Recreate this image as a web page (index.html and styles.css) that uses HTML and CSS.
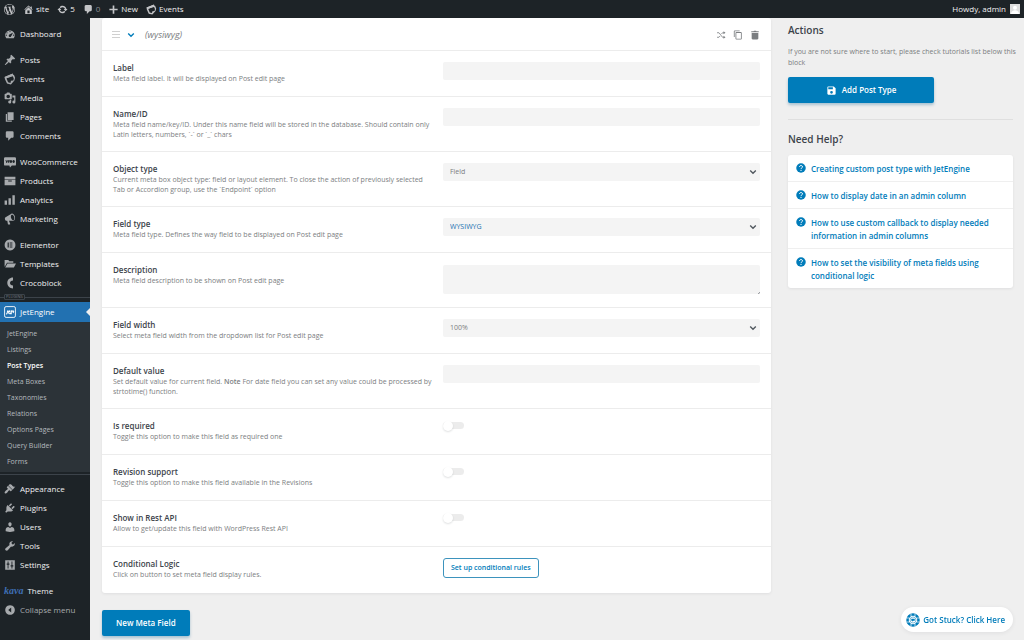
FILE: index.html
```html
<!DOCTYPE html>
<html lang="en">
<head>
<meta charset="utf-8">
<meta name="viewport" content="width=device-width, initial-scale=1">
<title>Edit Post Type</title>
<link rel="stylesheet" href="styles.css">
</head>
<body>
<svg class="sprite" aria-hidden="true">
  <symbol id="wp" viewBox="0 0 20 20"><path d="M20 10c0-5.51-4.49-10-10-10C4.48 0 0 4.49 0 10c0 5.52 4.48 10 10 10 5.51 0 10-4.48 10-10zM7.78 15.37L4.37 6.22c.55-.02 1.17-.08 1.17-.08.5-.06.44-1.13-.06-1.11 0 0-1.45.11-2.37.11-.18 0-.37 0-.58-.01C4.12 2.69 6.87 1.11 10 1.11c2.33 0 4.45.87 6.05 2.34-.68-.11-1.65.39-1.65 1.58 0 .74.45 1.36.9 2.1.35.61.55 1.36.55 2.46 0 1.49-1.4 5-1.4 5l-3.03-8.37c.54-.02.82-.17.82-.17.5-.05.44-1.25-.06-1.22 0 0-1.44.12-2.38.12-.87 0-2.33-.12-2.33-.12-.5-.03-.56 1.2-.06 1.22l.92.08 1.26 3.41zM17.41 10c.24-.64.74-1.87.43-4.25.7 1.29 1.05 2.71 1.05 4.25 0 3.29-1.73 6.24-4.4 7.78.97-2.59 1.94-5.2 2.92-7.78zM6.1 18.09C3.12 16.65 1.11 13.53 1.11 10c0-1.3.23-2.48.72-3.59C3.25 10.3 4.67 14.2 6.1 18.09zm4.03-6.63l2.58 6.98c-.86.29-1.76.45-2.71.45-.79 0-1.57-.11-2.29-.33.81-2.38 1.62-4.74 2.42-7.1z"/></symbol>
  <symbol id="home" viewBox="0 0 20 20"><path d="M16 8.5l1.53 1.53-1.06 1.06L10 4.6l-6.47 6.49-1.06-1.06L10 2.5l4 4v-2h2v4zm-6-2.46l6 5.99V18H4v-5.97zM12 17v-5H8v5h4z"/></symbol>
  <symbol id="update" viewBox="0 0 20 20"><path d="M10.2 3.28c3.53 0 6.43 2.61 6.92 6h2.08l-3.5 4-3.5-4h2.32c-.45-1.97-2.21-3.45-4.32-3.45-1.45 0-2.73.71-3.54 1.78L4.95 5.66C6.23 4.2 8.11 3.28 10.2 3.28zm-.4 13.44c-3.52 0-6.43-2.61-6.92-6H.8l3.5-4c1.17 1.33 2.33 2.67 3.5 4H5.48c.45 1.97 2.21 3.45 4.32 3.45 1.45 0 2.73-.71 3.54-1.78l1.71 1.95c-1.28 1.46-3.15 2.38-5.25 2.38z"/></symbol>
  <symbol id="comment" viewBox="0 0 20 20"><path d="M5 2h9q.82 0 1.41.59T16 4v7q0 .82-.59 1.41T14 13h-2l-5 5v-5H5q-.82 0-1.41-.59T3 11V4q0-.82.59-1.41T5 2z"/></symbol>
  <symbol id="plus" viewBox="0 0 20 20"><path d="M8.500 2.500h3v6h6v3h-6v6h-3v-6h-6v-3h6z"/></symbol>
  <symbol id="events" viewBox="0 0 20 20"><path fill-rule="evenodd" d="M1 6.500L14.500 1l1 2.500 1-.4L18.500 8l-1.200 4.500L11.500 19 5 17.500 1.500 10zM4 8.800l2.800 6.700 4 1 .8-3.500 4-.5.7-3.500-1.700-3.500z"/><path d="M1 6.500L14 1.200l1.300 3L2.500 9.500z"/></symbol>
  <symbol id="dash" viewBox="0 0 20 20"><path d="M3.760 17h12.480c1.100-1.370 1.760-3.110 1.760-5 0-4.420-3.580-8-8-8s-8 3.580-8 8c0 1.890.66 3.630 1.760 5zM9 6c0-.55.45-1 1-1s1 .45 1 1-.45 1-1 1-1-.45-1-1zM4 8c0-.55.45-1 1-1s1 .45 1 1-.45 1-1 1-1-.45-1-1zm4.520 3.400c.84-.83 6.510-3.500 6.510-3.500s-2.660 5.680-3.490 6.510c-.84.84-2.180.84-3.020 0-.83-.83-.83-2.180 0-3.010zM3 12c0-.55.45-1 1-1s1 .45 1 1-.45 1-1 1-1-.45-1-1zm12 0c0-.55.45-1 1-1s1 .45 1 1-.45 1-1 1-1-.45-1-1z"/></symbol>
  <symbol id="pin" viewBox="0 0 20 20"><path d="M10.440 3.020l1.820-1.820 6.360 6.350-1.830 1.820c-1.050-.68-2.480-.57-3.410.36l-.75.75c-.92.93-1.040 2.350-.35 3.410l-1.830 1.820-2.410-2.410-2.800 2.790c-.42.42-3.380 2.710-3.800 2.290s1.860-3.390 2.280-3.810l2.790-2.790L4.100 9.360l1.830-1.820c1.050.69 2.480.57 3.400-.36l.75-.75c.93-.92 1.050-2.350.36-3.410z"/></symbol>
  <symbol id="media" viewBox="0 0 20 20"><path fill-rule="evenodd" d="M13 11V4c0-.55-.45-1-1-1h-1.670L9 1H5L3.670 3H2c-.55 0-1 .45-1 1v7c0 .55.45 1 1 1h10c.55 0 1-.45 1-1zM7 4.500a3 3 0 1 1 0 6 3 3 0 0 1 0-6zM14 6h5v10.500a2.500 2.500 0 1 1-2-2.450V9h-3zm-4 8.050V13h2v3.500a2.500 2.500 0 1 1-2-2.450z"/></symbol>
  <symbol id="pages" viewBox="0 0 20 20"><path d="M6 15V2h10v13H6zm-1 1h8v2H3V5h2v11z"/></symbol>
  <symbol id="woo" viewBox="0 0 20 20"><path fill-rule="evenodd" d="M2 2h16q2 0 2 2v10q0 2-2 2h-5l-3 3-1-3H2q-2 0-2-2V4q0-2 2-2zm.5 4.500l1.500 5h1l1.300-3 1.200 3h1l1-5H7.300l-.5 2.500L6 7H5l-.8 2-.5-2.500zM11.500 6.500a2 2.500 0 1 0 .1 0zm4.500 0a2 2.500 0 1 0 .1 0z"/></symbol>
  <symbol id="archive" viewBox="0 0 20 20"><path fill-rule="evenodd" d="M1 3h18v4H1zm0 5h18v9H1zm6 1v2h6V9z"/></symbol>
  <symbol id="chart" viewBox="0 0 20 20"><path d="M1 11h4v7H1zm6.500-4h4v11h-4zM14 2h4v16h-4z"/></symbol>
  <symbol id="mega" viewBox="0 0 20 20"><path d="M18.150 5.940c.46 1.620.38 3.220-.02 4.480-.42 1.280-1.260 2.180-2.300 2.480-.16.060-.26.060-.4.060-.06.020-.12.020-.18.020-.06.020-.14.020-.22.020h-6.800l2.220 5.500c.02.140-.06.260-.14.340-.08.100-.24.160-.34.160H6.950c-.10 0-.26-.06-.34-.16-.08-.08-.16-.20-.14-.34l-1-5.500H4.250l-.02-.02c-.5.060-1.080-.18-1.540-.62s-.88-1.080-1.060-1.880c-.24-.80-.20-1.560-.02-2.200.18-.62.58-1.080 1.060-1.300l.02-.02 9-5.400c.10-.06.18-.10.24-.16.060-.04.140-.08.240-.12.160-.08.280-.12.500-.18 1.040-.30 2.240.10 3.220.98s1.840 2.240 2.260 3.860zm-2.580 5.980c.66-.18 1.180-.78 1.460-1.700.28-.90.340-2.100 0-3.440-.36-1.320-1.040-2.460-1.780-3.120-.72-.66-1.500-.94-2.160-.76s-1.180.78-1.460 1.700c-.26.90-.32 2.120.02 3.460.34 1.300 1.040 2.440 1.760 3.100.74.660 1.480.94 2.160.76z"/></symbol>
  <symbol id="elem" viewBox="0 0 20 20"><path fill-rule="evenodd" d="M10 1a9 9 0 1 0 .1 0zM6 6h2v8H6zm3.500 0H14v1.700H9.500zm0 3.100H14v1.800H9.500zm0 3.200H14V14H9.500z"/></symbol>
  <symbol id="folder" viewBox="0 0 20 20"><path d="M1 3.500h6l2 2h6.500V8H5l-3.500 6H1zM5.800 9H20l-3.500 7H2z"/></symbol>
  <symbol id="croco" viewBox="0 0 20 20"><path d="M15 1v5c-3 0-5 1.500-5 4s2 4 5 4v5c-5.500 0-9.500-4-9.500-9S9.500 1 15 1z"/></symbol>
  <symbol id="jet" viewBox="0 0 20 20"><rect x="1" y="1" width="18" height="18" rx="2.500" fill="none" stroke="currentColor" stroke-width="1.500"/><path d="M3.500 13c2 .5 2-2 2.500-5.500M7.500 10.500c2 0 2.500-2.500 1.200-2.500S6.800 13 9.500 13s2-1.500 3-5.500c-.5 3-1 5.500.5 5.500M11 8.500h5.500M15 11.500l1.500-3" fill="none" stroke="currentColor" stroke-width="1.800"/></symbol>
  <symbol id="brush" viewBox="0 0 20 20"><path d="M14.480 11.060L7.410 3.990l1.500-1.500c.5-.56 2.300-.47 3.510.32 1.210.80 1.430 1.280 2 2.100 1.180 1.640 2.450 1.260 4.450.85zm-.71.71L6.700 4.700 4.930 6.470c-.39.39-.39 1.020 0 1.410l1.060 1.060c.39.39.39 1.030 0 1.420-.6.600-1.430 1.110-2.210 1.690-.35.260-.70.530-1.010.84C1.430 14.230.4 16.080 1.400 17.070c.99 1 2.840-.03 4.180-1.360.31-.31.580-.66.850-1.020.57-.78 1.080-1.610 1.690-2.210.39-.39 1.020-.39 1.410 0l1.060 1.060c.39.390 1.020.390 1.410 0z"/></symbol>
  <symbol id="plug" viewBox="0 0 20 20"><path d="M13.110 4.360L9.870 7.600 8 5.730l3.240-3.240c.35-.34 1.050-.20 1.560.32.520.510.660 1.210.310 1.550zm-8 1.770l.91-1.120 9.010 9.010-1.190.84c-.71.710-2.630 1.160-3.820 1.160H6.140L4.900 17.260c-.59.590-1.540.590-2.120 0-.59-.58-.59-1.530 0-2.120L4 13.890v-3.880c0-1.130.4-3.190 1.110-3.880zm7.260 3.970l3.240-3.240c.34-.35 1.040-.21 1.550.310.520.510.66 1.210.310 1.550l-3.240 3.250z"/></symbol>
  <symbol id="user" viewBox="0 0 20 20"><path d="M10 9.250c-2.270 0-2.730-3.440-2.730-3.440C7 4.020 7.820 2 9.970 2c2.160 0 2.980 2.020 2.710 3.810 0 0-.41 3.440-2.680 3.440zm0 2.570L12.720 10c2.390 0 4.520 2.330 4.520 4.530v2.490s-3.650 1.130-7.240 1.130c-3.650 0-7.240-1.130-7.240-1.130v-2.490c0-2.250 1.940-4.480 4.470-4.480z"/></symbol>
  <symbol id="wrench" viewBox="0 0 20 20"><path d="M16.680 9.770c-1.340 1.340-3.300 1.670-4.950.99l-5.410 6.520c-.99.990-2.590.990-3.580 0s-.99-2.590 0-3.570l6.520-5.420c-.68-1.650-.35-3.610.99-4.950 1.280-1.280 3.120-1.620 4.720-1.060l-2.890 2.890 2.820 2.820 2.860-2.870c.53 1.580.18 3.390-1.080 4.650z"/></symbol>
  <symbol id="sliders" viewBox="0 0 20 20"><path fill-rule="evenodd" d="M2 2h16v16H2zm4 2v3.500H4.500v2H6V16h1.500V9.500H9v-2H7.500V4zm6.500 0v6.500H11v2h1.500V16H14v-3.500h1.500v-2H14V4z"/></symbol>
  <symbol id="collapse" viewBox="0 0 20 20"><path fill-rule="evenodd" d="M10 2a8 8 0 1 0 .1 0zM12 6v8l-5-4z"/></symbol>
  <symbol id="chev" viewBox="0 0 10 10"><path d="M1.500 3L5 6.500 8.500 3" fill="none" stroke="currentColor" stroke-width="1.700"/></symbol>
  <symbol id="lines" viewBox="0 0 10 10"><path d="M1 1.500h8M1 4.500h8M1 7.500h8" fill="none" stroke="currentColor"/></symbol>
  <symbol id="shuffle" viewBox="0 0 20 20"><path d="M2 5.500h4l7 9h3M2 14.500h4l2-2.500M11 8l2-2.500h3" fill="none" stroke="currentColor" stroke-width="1.600"/><path d="M15 2.500l4 3-4 3zm0 9l4 3-4 3z"/></symbol>
  <symbol id="copy" viewBox="0 0 24 24"><path d="M16 1H4c-1.100 0-2 .9-2 2v14h2V3h12V1zm3 4H8c-1.100 0-2 .9-2 2v14c0 1.100.9 2 2 2h11c1.100 0 2-.9 2-2V7c0-1.100-.9-2-2-2zm0 16H8V7h11v14z"/></symbol>
  <symbol id="trash" viewBox="0 0 24 24"><path d="M4 7h16v13c0 1.500-1 2.500-2.500 2.500h-11C5 22.500 4 21.500 4 20zM15.500 3l-1-1.500h-5L8.500 3H3v2.500h18V3z"/></symbol>
  <symbol id="save" viewBox="0 0 24 24"><path d="M17 3H5a2 2 0 0 0-2 2v14c0 1.100.9 2 2 2h14c1.100 0 2-.9 2-2V7l-4-4zm-5 16a3 3 0 1 1 0-6 3 3 0 0 1 0 6zm3-10H5V5h10v4z"/></symbol>
  <symbol id="help" viewBox="0 0 20 20"><circle cx="10" cy="10" r="9.500"/><path d="M7 8c0-4 6.200-3.800 6-.3C13 9.800 10 9.700 10 12.300M10 14v2" fill="none" stroke="#fff" stroke-width="2"/></symbol>
  <symbol id="buoy" viewBox="0 0 28 28"><circle cx="14" cy="14" r="11" fill="none" stroke="currentColor" stroke-width="5"/><path d="M10 1.500v5M18 1.500v5M10 21.500v5M18 21.500v5M1.500 10h5M1.500 18h5M21.500 10h5M21.500 18h5" stroke="#fff" stroke-width="1.500"/><circle cx="14" cy="14" r="6" fill="none" stroke="currentColor"/><path d="M10.500 11.500h7v4h-3l-2 2v-2h-2z"/></symbol>
</svg>

<header class="adminbar">
  <nav class="adminbar-links" aria-label="Toolbar">
    <a href="#" aria-label="About WordPress"><svg><use href="#wp"/></svg></a>
    <a href="#"><svg><use href="#home"/></svg>site</a>
    <a href="#"><svg><use href="#update"/></svg>5</a>
    <a href="#" class="muted"><svg><use href="#comment"/></svg>0</a>
    <a href="#"><svg><use href="#plus"/></svg>New</a>
    <a href="#"><svg><use href="#events"/></svg>Events</a>
  </nav>
  <a class="account" href="#">Howdy, admin
    <svg class="avatar" viewBox="0 0 20 20"><rect width="20" height="20" fill="#ddd"/><circle cx="10" cy="7.500" r="4" fill="#fff"/><path d="M2 20c0-10 16-10 16 0z" fill="#fff"/></svg>
  </a>
</header>

<div class="layout">
  <nav class="menu" aria-label="Main menu">
    <ul>
      <li><a href="#"><svg><use href="#dash"/></svg>Dashboard</a></li>
    </ul>
    <ul>
      <li><a href="#"><svg><use href="#pin"/></svg>Posts</a></li>
      <li><a href="#"><svg><use href="#events"/></svg>Events</a></li>
      <li><a href="#"><svg><use href="#media"/></svg>Media</a></li>
      <li><a href="#"><svg><use href="#pages"/></svg>Pages</a></li>
      <li><a href="#"><svg><use href="#comment"/></svg>Comments</a></li>
    </ul>
    <ul>
      <li><a href="#"><svg><use href="#woo"/></svg>WooCommerce</a></li>
      <li><a href="#"><svg><use href="#archive"/></svg>Products</a></li>
      <li><a href="#"><svg><use href="#chart"/></svg>Analytics</a></li>
      <li><a href="#"><svg><use href="#mega"/></svg>Marketing</a></li>
    </ul>
    <ul>
      <li><a href="#"><svg><use href="#elem"/></svg>Elementor</a></li>
      <li><a href="#"><svg><use href="#folder"/></svg>Templates</a></li>
      <li><a href="#"><svg><use href="#croco"/></svg>Crocoblock</a></li>
    </ul>
    <div class="divider"><span>PLUGINS</span></div>
    <a class="current" href="#"><svg><use href="#jet"/></svg>JetEngine</a>
    <ul class="submenu">
      <li><a href="#">JetEngine</a></li>
      <li><a href="#">Listings</a></li>
      <li><a href="#" class="active">Post Types</a></li>
      <li><a href="#">Meta Boxes</a></li>
      <li><a href="#">Taxonomies</a></li>
      <li><a href="#">Relations</a></li>
      <li><a href="#">Options Pages</a></li>
      <li><a href="#">Query Builder</a></li>
      <li><a href="#">Forms</a></li>
    </ul>
    <div class="rule"></div>
    <ul>
      <li><a href="#"><svg><use href="#brush"/></svg>Appearance</a></li>
      <li><a href="#"><svg><use href="#plug"/></svg>Plugins</a></li>
      <li><a href="#"><svg><use href="#user"/></svg>Users</a></li>
      <li><a href="#"><svg><use href="#wrench"/></svg>Tools</a></li>
      <li><a href="#"><svg><use href="#sliders"/></svg>Settings</a></li>
    </ul>
    <ul>
      <li><a class="theme" href="#"><span class="kava">kava</span>Theme</a></li>
      <li><button class="collapse" type="button"><svg><use href="#collapse"/></svg>Collapse menu</button></li>
    </ul>
  </nav>

  <main class="content">
    <section class="fields">
      <div class="card">
        <div class="card-head">
          <svg class="drag"><use href="#lines"/></svg>
          <button class="toggle-card" type="button" aria-label="Collapse field"><svg><use href="#chev"/></svg></button>
          <em>(wysiwyg)</em>
          <div class="tools">
            <button type="button" aria-label="Move"><svg><use href="#shuffle"/></svg></button>
            <button type="button" aria-label="Duplicate"><svg><use href="#copy"/></svg></button>
            <button type="button" aria-label="Delete"><svg><use href="#trash"/></svg></button>
          </div>
        </div>
        <div class="row">
          <div class="info"><label for="f-label">Label</label><p>Meta field label. It will be displayed on Post edit page</p></div>
          <div class="control"><input class="box" id="f-label" type="text"></div>
        </div>
        <div class="row">
          <div class="info"><label for="f-name">Name/ID</label><p>Meta field name/key/ID. Under this name field will be stored in the database. Should contain only Latin letters, numbers, `-` or `_` chars</p></div>
          <div class="control"><input class="box" id="f-name" type="text"></div>
        </div>
        <div class="row">
          <div class="info"><label for="f-object">Object type</label><p>Current meta box object type: field or layout element. To close the action of previously selected Tab or Accordion group, use the `Endpoint` option</p></div>
          <div class="control"><select class="box" id="f-object"><option>Field</option></select><svg class="caret"><use href="#chev"/></svg></div>
        </div>
        <div class="row">
          <div class="info"><label for="f-type">Field type</label><p>Meta field type. Defines the way field to be displayed on Post edit page</p></div>
          <div class="control"><select class="box focused" id="f-type"><option>WYSIWYG</option></select><svg class="caret"><use href="#chev"/></svg></div>
        </div>
        <div class="row">
          <div class="info"><label for="f-desc">Description</label><p>Meta field description to be shown on Post edit page</p></div>
          <div class="control"><textarea class="box area" id="f-desc"></textarea></div>
        </div>
        <div class="row">
          <div class="info"><label for="f-width">Field width</label><p>Select meta field width from the dropdown list for Post edit page</p></div>
          <div class="control"><select class="box" id="f-width"><option>100%</option></select><svg class="caret"><use href="#chev"/></svg></div>
        </div>
        <div class="row">
          <div class="info"><label for="f-default">Default value</label><p>Set default value for current field. <b>Note</b> For date field you can set any value could be processed by strtotime() function.</p></div>
          <div class="control"><input class="box" id="f-default" type="text"></div>
        </div>
        <div class="row">
          <div class="info"><label for="f-req">Is required</label><p>Toggle this option to make this field as required one</p></div>
          <div class="control"><input class="switch" id="f-req" type="checkbox"></div>
        </div>
        <div class="row">
          <div class="info"><label for="f-rev">Revision support</label><p>Toggle this option to make this field available in the Revisions</p></div>
          <div class="control"><input class="switch" id="f-rev" type="checkbox"></div>
        </div>
        <div class="row">
          <div class="info"><label for="f-rest">Show in Rest API</label><p>Allow to get/update this field with WordPress Rest API</p></div>
          <div class="control"><input class="switch" id="f-rest" type="checkbox"></div>
        </div>
        <div class="row">
          <div class="info"><label for="f-cond">Conditional Logic</label><p>Click on button to set meta field display rules.</p></div>
          <div class="control"><button class="outline" id="f-cond" type="button">Set up conditional rules</button></div>
        </div>
      </div>
      <button class="primary new-field" type="button">New Meta Field</button>
    </section>

    <aside class="side">
      <h2>Actions</h2>
      <p class="hint">If you are not sure where to start, please check tutorials list below this block</p>
      <button class="primary add" type="button"><svg><use href="#save"/></svg>Add Post Type</button>
      <hr>
      <h2>Need Help?</h2>
      <ul class="help">
        <li><a href="#"><svg><use href="#help"/></svg><span>Creating custom post type with JetEngine</span></a></li>
        <li><a href="#"><svg><use href="#help"/></svg><span>How to display date in an admin column</span></a></li>
        <li><a href="#"><svg><use href="#help"/></svg><span>How to use custom callback to display needed information in admin columns</span></a></li>
        <li><a href="#"><svg><use href="#help"/></svg><span>How to set the visibility of meta fields using conditional logic</span></a></li>
      </ul>
    </aside>
  </main>
</div>
<a class="stuck" href="#"><svg><use href="#buoy"/></svg>Got Stuck? Click Here</a>
</body>
</html>
```
FILE: styles.css
```css
* { box-sizing: border-box; }
body {
  margin: 0;
  background: #efefef;
  color: #3c434a;
  font: 8px/12px "Open Sans", "Noto Sans", sans-serif;
}
ul, p, h2 { margin: 0; padding: 0; }
ul { list-style: none; }
a { color: inherit; text-decoration: none; }
button {
  font: inherit;
  color: inherit;
  background: none;
  border: 0;
  padding: 0;
  cursor: pointer;
}
svg { display: block; width: 12px; height: 12px; flex: none; fill: currentColor; }
.sprite { position: absolute; width: 0; height: 0; }

.adminbar {
  display: flex;
  justify-content: space-between;
  align-items: center;
  height: 18px;
  padding: 0 4px;
  background: #1d2327;
  color: #f0f0f1;
}
.adminbar-links { display: flex; gap: 8px; }
.adminbar-links a, .account { display: flex; align-items: center; gap: 2px; }
.adminbar-links svg { width: 11px; height: 11px; color: #c3c4c7; }
.adminbar-links .muted { color: #8c8f94; }
.account { gap: 4px; }
.account .avatar { width: 10px; height: 10px; }

.layout { display: flex; min-height: calc(100vh - 18px); }
.menu {
  flex: none;
  width: 90px;
  padding-top: 6px;
  background: #1d2327;
  color: #f0f0f1;
}
.menu ul + ul { margin-top: 7px; }
.menu li > a, .menu li > button, .current {
  display: flex;
  align-items: center;
  gap: 4px;
  height: 19px;
  padding-left: 4px;
}
.menu svg { color: #a7aaad; }
.divider {
  display: flex;
  align-items: center;
  height: 10px;
  color: #777d83;
  font-size: 4px;
  line-height: 4px;
}
.divider::before { content: ""; width: 4px; border-top: 1px solid #3c434a; }
.divider::after { content: ""; flex: 1; border-top: 1px solid #3c434a; }
.divider span { padding: 0 1px; border: 1px solid #3c434a; border-radius: 1px; }
.current {
  position: relative;
  height: 20px;
  background: #2271b1;
  color: #fff;
}
.menu .current svg { color: #fff; }
.current::after {
  content: "";
  position: absolute;
  right: 0;
  top: 6px;
  border: 4px solid transparent;
  border-right-color: #efefef;
  border-left: 0;
}
.submenu { padding: 4px 0 2px; background: #2c3338; color: #b4b9be; }
.menu .submenu a { height: 16px; padding-left: 7px; font-size: 7px; }
.menu .submenu .active { color: #fff; font-weight: 600; }
.rule { height: 5px; border-top: 1px solid #3c434a; margin-top: 2px; }
.theme .kava { color: #3f6fb5; font: italic bold 10px/12px "Liberation Serif", serif; }
.menu .collapse { color: #a7aaad; }

.content {
  flex: 1;
  min-width: 0;
  display: grid;
  grid-template-columns: minmax(0, 1fr) 225px;
  column-gap: 17px;
  padding: 0 11px 4px 12px;
}
.fields { min-width: 0; }
.card {
  background: #fff;
  border-radius: 3px;
  box-shadow: 0 1px 3px rgba(35, 40, 45, 0.08);
}
.card-head {
  display: flex;
  align-items: center;
  height: 33px;
  padding: 2px 11px 0 9px;
  border-bottom: 1px solid #ececec;
  color: #7b7e81;
}
.card-head em { margin-left: 10px; font-size: 9px; }
.card-head .drag { width: 10px; height: 10px; color: #d0d0d0; }
.toggle-card { margin-left: 6px; color: #007cba; }
.toggle-card svg { width: 8px; height: 8px; }
.tools { display: flex; align-items: center; gap: 7px; margin-left: auto; }
.tools svg { width: 10px; height: 10px; }
.row {
  display: grid;
  grid-template-columns: minmax(0, 51fr) minmax(0, 49fr);
  min-height: 46px;
  padding: 11px;
  border-bottom: 1px solid #ececec;
}
.row:last-child { border-bottom: 0; }
.info { padding-right: 8px; }
.info label { display: block; font-weight: 600; color: #3c434a; }
.info p { color: #7b7e81; font-size: 7px; line-height: 10px; }
.info b { font-weight: 600; }
.control { position: relative; }
.box {
  display: block;
  width: 100%;
  height: 18px;
  padding: 0 7px;
  border: 0;
  border-radius: 2px;
  background: #f4f4f4;
  color: #7b7e81;
  font: 7px/18px "Open Sans", "Noto Sans", sans-serif;
  appearance: none;
}
.box.focused { color: #2271b1; }
.area {
  height: 29px;
  margin: 1px 0 2px;
  resize: none;
  background: linear-gradient(135deg, transparent 50%, #8c8f94 50%) right bottom / 2px 2px no-repeat #f4f4f4;
}
.caret {
  position: absolute;
  right: 3px;
  top: 5px;
  width: 8px;
  height: 8px;
  color: #50575e;
  pointer-events: none;
}
.switch {
  appearance: none;
  display: flex;
  align-items: center;
  width: 21px;
  height: 7px;
  margin: 2px 0;
  border-radius: 4px;
  background: #ececec;
}
.switch::before {
  content: "";
  width: 10px;
  height: 10px;
  border-radius: 50%;
  background: #fff;
  box-shadow: 0 1px 2px rgba(35, 40, 45, 0.15);
}
.outline {
  height: 20px;
  padding: 0 7px;
  border: 1px solid #3d93bd;
  border-radius: 3px;
  color: #007cba;
  font-size: 7px;
  font-weight: 600;
}
.primary {
  display: flex;
  align-items: center;
  justify-content: center;
  gap: 5px;
  height: 26px;
  border-radius: 2px;
  background: #007cba;
  box-shadow: 0 2px 3px rgba(0, 90, 140, 0.3);
  color: #fff;
  font-weight: 600;
}
.primary svg { width: 11px; height: 11px; }
.new-field { margin-top: 17px; padding: 0 14px; }

.side { padding-top: 5px; }
.side h2 { font-size: 10px; line-height: 14px; font-weight: 600; }
.hint { margin: 9px -6px 9px 0; color: #7b7e81; font-size: 7px; line-height: 11px; }
.add { width: 65%; }
.side hr { margin: 16px 0 12px; border: 0; border-top: 1px solid #dfdfdf; }
.help {
  margin-top: 9px;
  border-radius: 3px;
  background: #fff;
  box-shadow: 0 1px 3px rgba(35, 40, 45, 0.08);
  color: #007cba;
  font-weight: 600;
  line-height: 13px;
}
.help li + li { border-top: 1px solid #efefef; }
.help a { display: flex; gap: 5px; padding: 7px 8px 6px; }
.help svg { width: 10px; height: 10px; margin-top: 1px; }
.stuck {
  position: fixed;
  right: 11px;
  bottom: 8px;
  display: flex;
  align-items: center;
  gap: 3px;
  height: 25px;
  padding: 0 8px 0 5px;
  border-radius: 13px;
  background: #fff;
  box-shadow: 0 1px 4px rgba(35, 40, 45, 0.08);
  color: #007cba;
  font-weight: 600;
}
.stuck svg { width: 14px; height: 14px; }
```
